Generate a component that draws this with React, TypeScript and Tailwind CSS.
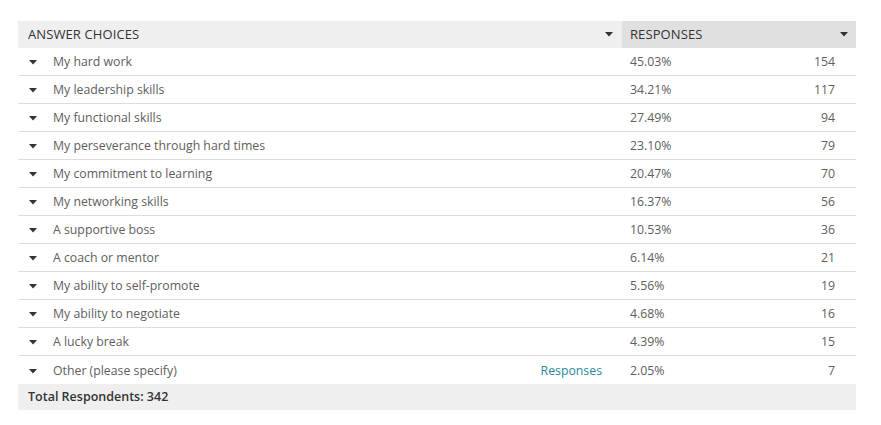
import React from "react";

const rows: [string, string, number][] = [
  ["My hard work", "45.03%", 154],
  ["My leadership skills", "34.21%", 117],
  ["My functional skills", "27.49%", 94],
  ["My perseverance through hard times", "23.10%", 79],
  ["My commitment to learning", "20.47%", 70],
  ["My networking skills", "16.37%", 56],
  ["A supportive boss", "10.53%", 36],
  ["A coach or mentor", "6.14%", 21],
  ["My ability to self-promote", "5.56%", 19],
  ["My ability to negotiate", "4.68%", 16],
  ["A lucky break", "4.39%", 15],
  ["Other (please specify)", "2.05%", 7],
];

function Caret() {
  return (
    <svg width="8" height="5" viewBox="0 0 8 5" className="shrink-0">
      <path d="M0 0 H8 L4 4.5 Z" fill="#333" />
    </svg>
  );
}

export default function App() {
  return (
    <div
      className="w-[881px] h-[425px] bg-white pt-[21px] pl-[18px] text-[12.3px]"
      style={{ fontFamily: '"Open Sans", "Liberation Sans", sans-serif' }}
    >
      <div className="w-[838px]">
        <div className="flex h-[27px] text-[#333] text-[13px] tracking-[0.1px]">
          <div className="w-[604px] bg-[#efefef] flex items-center justify-between pl-[10px] pr-[9px]">
            <span>ANSWER CHOICES</span>
            <Caret />
          </div>
          <div className="flex-1 bg-[#e0e0e0] flex items-center justify-between pl-[8px] pr-[8px]">
            <span>RESPONSES</span>
            <Caret />
          </div>
        </div>
        {rows.map(([label, pct, n], i) => (
          <div
            key={label}
            className={`flex h-[28px] items-center pt-[2px] text-[#5e5e5e] ${i < rows.length - 1 ? "border-b border-[#dcdcdc]" : ""}`}
          >
            <div className="w-[604px] flex items-center pl-[11px] pr-[20px]">
              <Caret />
              <span className="ml-[16px] flex-1">{label}</span>
              {i === rows.length - 1 && <span className="text-[#2a8a9c]">Responses</span>}
            </div>
            <div className="flex-1 flex items-center justify-between pl-[8px] pr-[21px]">
              <span>{pct}</span>
              <span>{n}</span>
            </div>
          </div>
        ))}
        <div className="h-[26px] bg-[#efefef] flex items-center pl-[10px] text-[#333] text-[12.5px] font-semibold">
          Total Respondents: 342
        </div>
      </div>
    </div>
  );
}
